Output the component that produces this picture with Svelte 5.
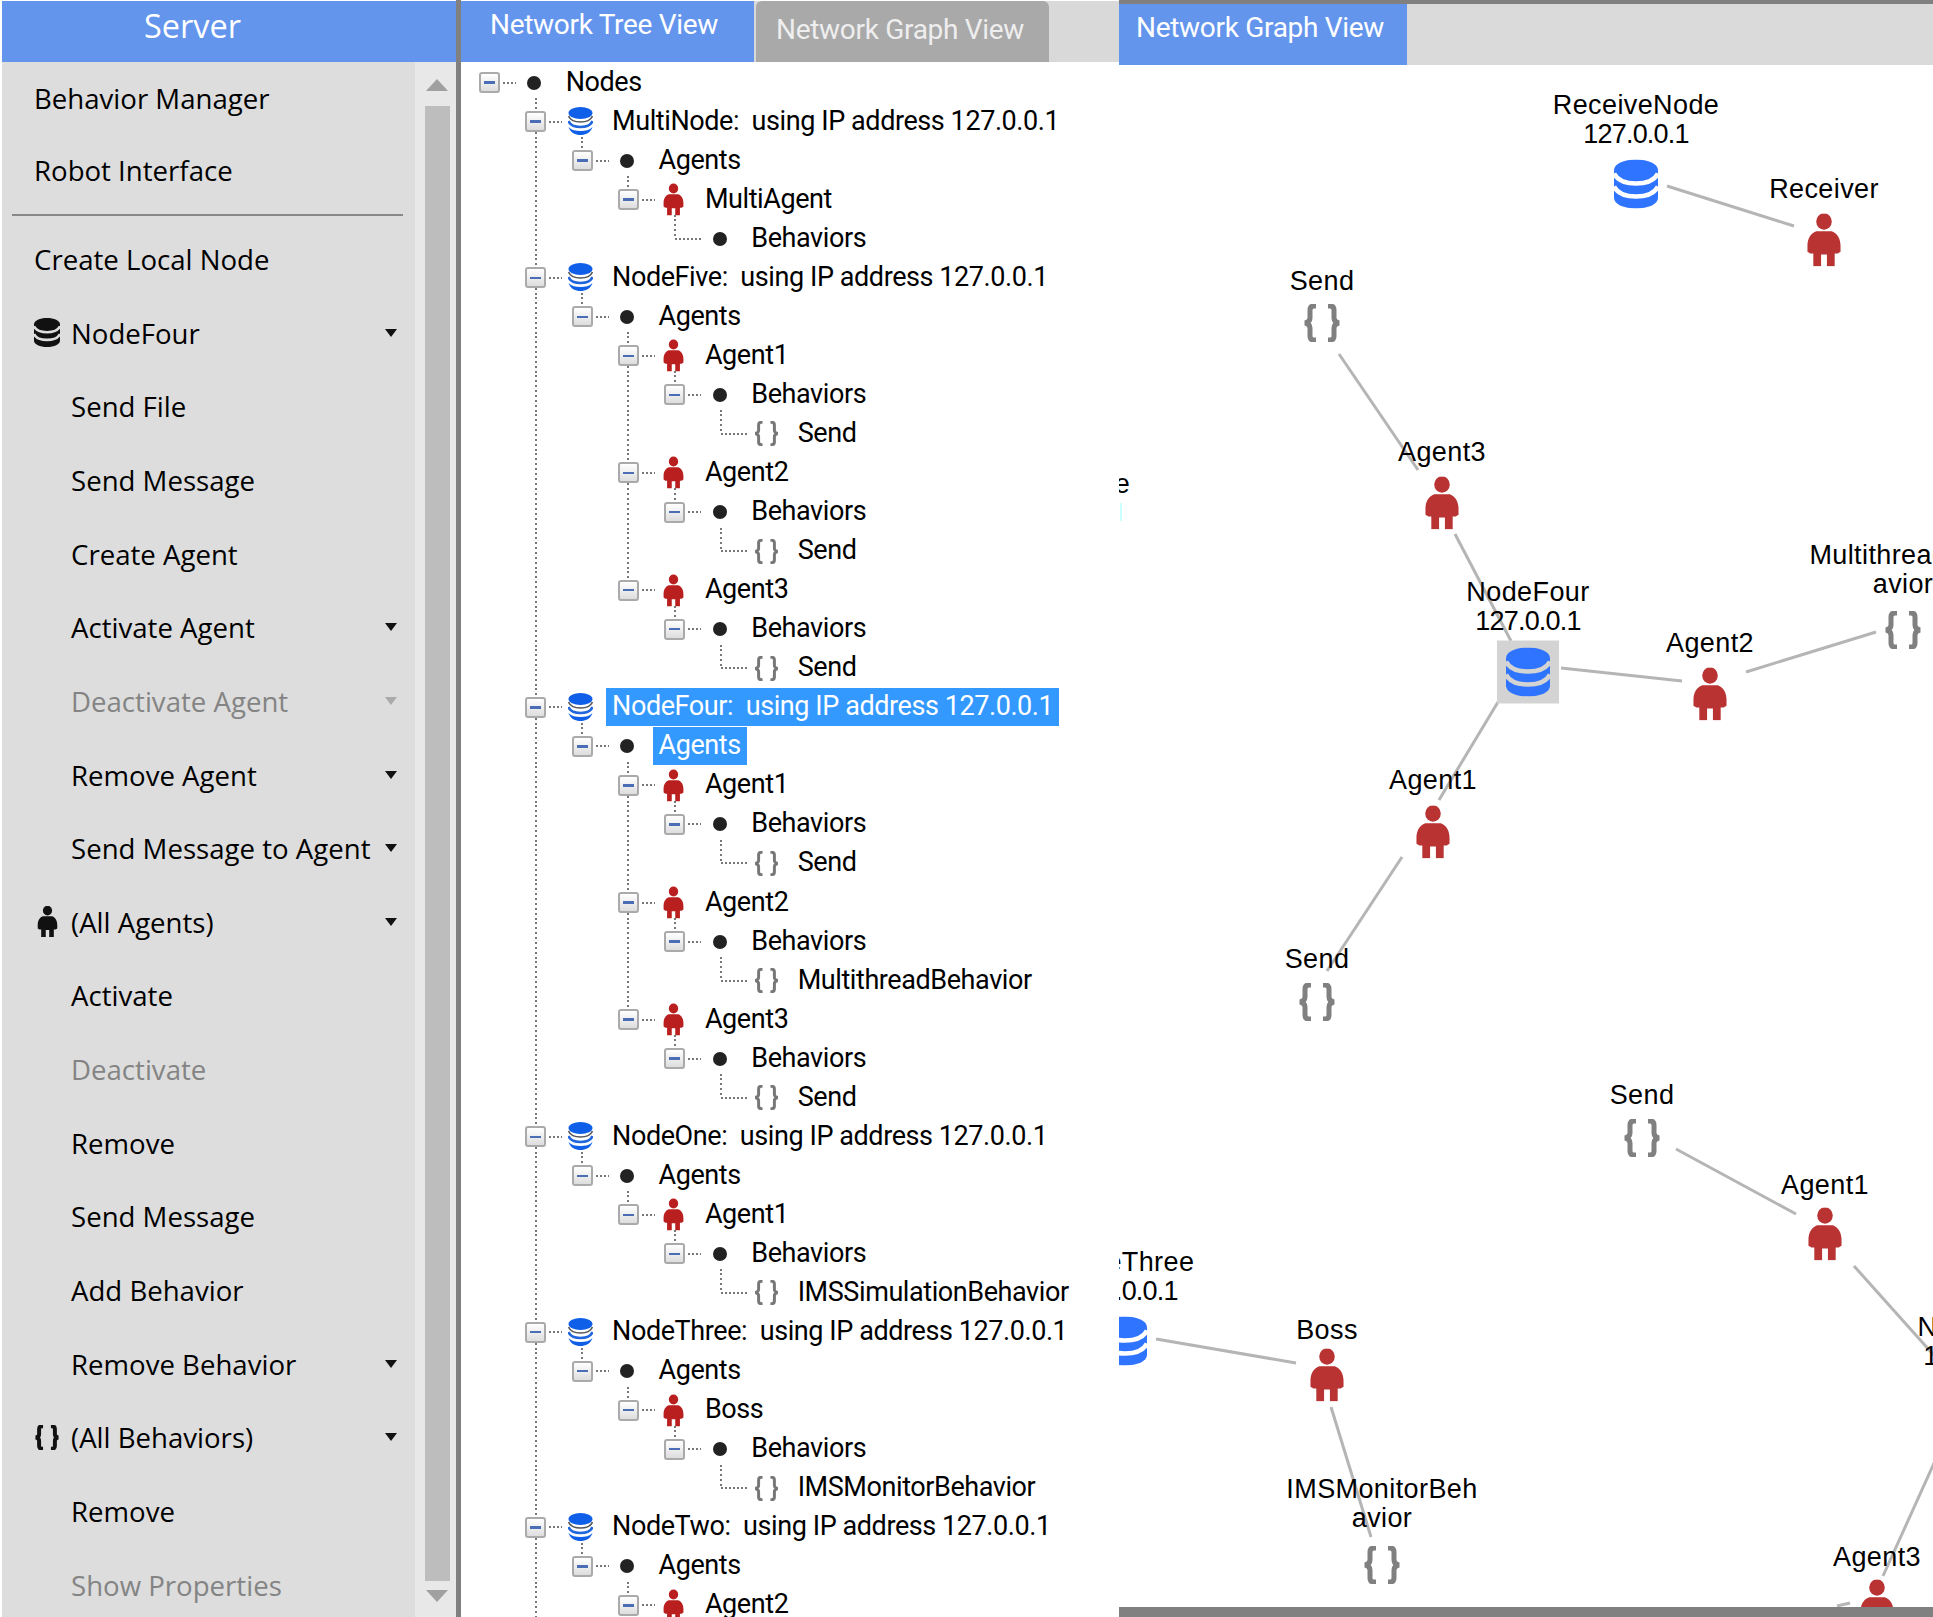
<script>
  const menu = [
    { text: 'Behavior Manager', indent: false },
    { text: 'Robot Interface', indent: false },
    { sep: true },
    { text: 'Create Local Node', indent: false },
    { text: 'NodeFour', icon: 'db', arrow: true },
    { text: 'Send File' },
    { text: 'Send Message' },
    { text: 'Create Agent' },
    { text: 'Activate Agent', arrow: true },
    { text: 'Deactivate Agent', arrow: true, disabled: true },
    { text: 'Remove Agent', arrow: true },
    { text: 'Send Message to Agent', arrow: true },
    { text: '(All Agents)', icon: 'person', arrow: true },
    { text: 'Activate' },
    { text: 'Deactivate', disabled: true },
    { text: 'Remove' },
    { text: 'Send Message' },
    { text: 'Add Behavior' },
    { text: 'Remove Behavior', arrow: true },
    { text: '(All Behaviors)', icon: 'braces', arrow: true },
    { text: 'Remove' },
    { text: 'Show Properties', disabled: true },
  ];

  const ip = ':  using IP address 127.0.0.1';

  // level, icon, label, selected
  const tree = [
    [0, 'dot', 'Nodes'],
    [1, 'db', 'MultiNode' + ip],
    [2, 'dot', 'Agents'],
    [3, 'person', 'MultiAgent'],
    [4, 'dot', 'Behaviors'],
    [1, 'db', 'NodeFive' + ip],
    [2, 'dot', 'Agents'],
    [3, 'person', 'Agent1'],
    [4, 'dot', 'Behaviors'],
    [5, 'braces', 'Send'],
    [3, 'person', 'Agent2'],
    [4, 'dot', 'Behaviors'],
    [5, 'braces', 'Send'],
    [3, 'person', 'Agent3'],
    [4, 'dot', 'Behaviors'],
    [5, 'braces', 'Send'],
    [1, 'db', 'NodeFour' + ip, true],
    [2, 'dot', 'Agents', true],
    [3, 'person', 'Agent1'],
    [4, 'dot', 'Behaviors'],
    [5, 'braces', 'Send'],
    [3, 'person', 'Agent2'],
    [4, 'dot', 'Behaviors'],
    [5, 'braces', 'MultithreadBehavior'],
    [3, 'person', 'Agent3'],
    [4, 'dot', 'Behaviors'],
    [5, 'braces', 'Send'],
    [1, 'db', 'NodeOne' + ip],
    [2, 'dot', 'Agents'],
    [3, 'person', 'Agent1'],
    [4, 'dot', 'Behaviors'],
    [5, 'braces', 'IMSSimulationBehavior'],
    [1, 'db', 'NodeThree' + ip],
    [2, 'dot', 'Agents'],
    [3, 'person', 'Boss'],
    [4, 'dot', 'Behaviors'],
    [5, 'braces', 'IMSMonitorBehavior'],
    [1, 'db', 'NodeTwo' + ip],
    [2, 'dot', 'Agents'],
    [3, 'person', 'Agent2'],
  ];

  const INDENT = 46.4;
  const col = (level) => 28.2 + level * INDENT;

  function hasNext(i, level) {
    for (let j = i + 1; j < tree.length; j++) {
      if (tree[j][0] < level) return false;
      if (tree[j][0] === level) return true;
    }
    return level === 1;
  }

  const rows = tree.map(([level, icon, text, selected], i) => {
    const next = tree[i + 1];
    const parent = i === tree.length - 1 || next[0] > level;
    const guides = [];
    for (let k = 1; k < level; k++) {
      if (hasNext(i, k)) guides.push({ x: col(k), top: 0, h: 39.1 });
    }
    if (level > 0) guides.push({ x: col(level), top: 0, h: hasNext(i, level) ? 39.1 : 20 });
    if (parent && i < tree.length - 1) guides.push({ x: col(level + 1), top: 35, h: 4 });
    return { level, icon, text, selected, parent, guides };
  });

  const OX = 1119;
  const OY = 65;

  const edges = [
    [1667, 186, 1794, 226],
    [1339, 354, 1418, 470],
    [1455, 534, 1511, 641],
    [1561, 668, 1682, 681],
    [1746, 672, 1876, 632],
    [1498, 702, 1439, 800],
    [1402, 857, 1327, 971],
    [1676, 1149, 1796, 1214],
    [1854, 1266, 1940, 1362],
    [1940, 1450, 1883, 1576],
    [1837, 1606, 1850, 1603],
    [1156, 1339, 1296, 1363],
    [1331, 1407, 1371, 1537],
  ];

  const nodes = [
    { type: 'db', x: 1636, y: 184, label: ['ReceiveNode', '127.0.0.1'], ly: 105 },
    { type: 'person', x: 1824, y: 240, label: ['Receiver'], ly: 189 },
    { type: 'braces', x: 1322, y: 323, label: ['Send'], ly: 281 },
    { type: 'person', x: 1442, y: 503, label: ['Agent3'], ly: 452 },
    { type: 'db', x: 1528, y: 672, label: ['NodeFour', '127.0.0.1'], ly: 592, selected: true },
    { type: 'person', x: 1710, y: 694, label: ['Agent2'], ly: 643 },
    { type: 'braces', x: 1903, y: 630, label: ['MultithreadBeh', 'avior'], ly: 555 },
    { type: 'person', x: 1433, y: 832, label: ['Agent1'], ly: 780 },
    { type: 'braces', x: 1317, y: 1002, label: ['Send'], ly: 959 },
    { type: 'braces', x: 1642, y: 1138, label: ['Send'], ly: 1095 },
    { type: 'person', x: 1825, y: 1234, label: ['Agent1'], ly: 1185 },
    { type: 'db', x: 1125, y: 1341, label: ['NodeThree', '127.0.0.1'], ly: 1262 },
    { type: 'person', x: 1327, y: 1375, label: ['Boss'], ly: 1330 },
    { type: 'braces', x: 1382, y: 1565, label: ['IMSMonitorBeh', 'avior'], ly: 1489 },
    { type: 'person', x: 1877, y: 1606, label: ['Agent3'], ly: 1557 },
    { type: 'db', x: 1976, y: 1400, label: ['NodeTwo', '127.0.0.1'], ly: 1327 },
    { type: 'db', x: 1071, y: 560, label: ['NodeOne'], ly: 484 },
  ];
</script>

{#snippet db(w, h, fill, gap)}
  <svg width={w} height={h} viewBox="0 0 44 49">
    <path d="M0 11C0 4 10 0 22 0s22 4 22 11v27c0 7-10 11-22 11S0 45 0 38Z" fill={fill} />
    <path d="M0 14C4 22 14 24 22 24s18-2 22-10M0 27c4 8 14 10 22 10s18-2 22-10" fill="none" stroke={gap} stroke-width="4.5" />
  </svg>
{/snippet}

{#snippet treeDb()}
  <svg width="25" height="29" viewBox="0 0 25 29">
    <ellipse cx="12.5" cy="6" rx="12" ry="6" fill="#0f5fe8" />
    <path d="M.5 9c2 5 7 6 12 6s10-1 12-6" fill="none" stroke="#555" stroke-width="1.6" />
    <path d="M.5 14c2 5 7 6 12 6s10-1 12-6" fill="none" stroke="#2266dd" stroke-width="2.6" />
    <path d="M.5 20c2 6 7 8 12 8s10-2 12-8c-3 3-7 4-12 4s-9-1-12-4Z" fill="#0f5fe8" />
  </svg>
{/snippet}

{#snippet person(w, h, fill)}
  <svg width={w} height={h} viewBox="0 0 36 54">
    <ellipse cx="18" cy="8" rx="8" ry="8.5" fill={fill} />
    <path d="M10 18h16c6 2 9 8 9 15v6l-3 2h-3v13h-8V42h-6v12H7V41H4l-3-2v-6c0-7 3-13 9-15Z" fill={fill} />
  </svg>
{/snippet}

{#snippet braces(w, h, stroke, sw)}
  <svg width={w} height={h} viewBox="0 0 38 38">
    <path d="M13 2h-2Q7 2 7 6v8q0 4-5 5 5 1 5 5v8q0 4 4 4h2M25 2h2q4 0 4 4v8q0 4 5 5-5 1-5 5v8q0 4-4 4h-2" fill="none" stroke={stroke} stroke-width={sw} />
  </svg>
{/snippet}

<div class="app">
  <aside class="side">
    <div class="side-head">Server</div>
    <div class="side-body">
      <nav class="menu">
        {#each menu as item}
          {#if item.sep}
            <div class="sep"></div>
          {:else}
            <div class="item" class:disabled={item.disabled}>
              {#if item.indent !== false}
                <span class="item-icon">
                  {#if item.icon === 'db'}
                    {@render db(26, 29, '#111', '#ddd')}
                  {:else if item.icon === 'person'}
                    <span class="menu-person">{@render person(21, 31, '#111')}</span>
                  {:else if item.icon === 'braces'}
                    {@render braces(26, 25, '#111', 6)}
                  {/if}
                </span>
              {/if}
              <span class="item-text">{item.text}</span>
              {#if item.arrow}<span class="caret"></span>{/if}
            </div>
          {/if}
        {/each}
      </nav>
      <div class="scrollbar">
        <span class="sb-up"></span>
        <div class="sb-thumb"></div>
        <span class="sb-down"></span>
      </div>
    </div>
  </aside>

  <div class="splitter"></div>

  <section class="middle">
    <div class="tabs">
      <div class="tab active">Network Tree View</div>
      <div class="tab inactive">Network Graph View</div>
    </div>
    <div class="tree">
      {#each rows as row}
        <div class="row" style="padding-left: {col(row.level) - 10.5}px">
          {#each row.guides as g}
            <span class="guide" style="left: {g.x - 1}px; top: {g.top}px; height: {g.h}px"></span>
          {/each}
          <span class="lead">
            {#if row.parent}
              <span class="box"><span class="minus"></span></span>
              <span class="dots short"></span>
            {:else}
              <span class="dots long"></span>
            {/if}
          </span>
          <span class="tree-icon">
            {#if row.icon === 'dot'}
              <span class="dot"></span>
            {:else if row.icon === 'db'}
              {@render treeDb()}
            {:else if row.icon === 'person'}
              {@render person(21, 33, '#b91f1f')}
            {:else}
              {@render braces(25, 25, '#777', 4.5)}
            {/if}
          </span>
          <span class="label" class:selected={row.selected}>{row.text}</span>
        </div>
      {/each}
    </div>
  </section>

  <section class="right">
    <div class="right-tabs">
      <div class="tab active right-tab">Network Graph View</div>
    </div>
    <div class="canvas">
      <svg class="edges" width="814" height="1545">
        {#each edges as [x1, y1, x2, y2]}
          <line x1={x1 - OX} y1={y1 - OY} x2={x2 - OX} y2={y2 - OY} />
        {/each}
      </svg>
      {#each nodes as n}
        <div class="glabel" style="left: {n.x - OX}px; top: {n.ly - OY - 14}px">
          {#each n.label as line}
            <div class:ip={line === '127.0.0.1'}>{line}</div>
          {/each}
        </div>
        <div class="gicon" class:selected={n.selected} style="left: {n.x - OX}px; top: {n.y - OY}px">
          {#if n.type === 'db'}
            {@render db(44, 49, '#2f74ff', n.selected ? '#d3d3d3' : '#fff')}
          {:else if n.type === 'person'}
            {@render person(35, 53, '#b93333')}
          {:else}
            {@render braces(38, 38, '#808080', 5)}
          {/if}
        </div>
      {/each}
      <span class="fringe"></span>
    </div>
    <div class="bottom-bar"></div>
  </section>
</div>

<style>
  :global(body) {
    margin: 0;
    background: #fff;
  }

  .app {
    display: flex;
    width: 1933px;
    height: 1617px;
    overflow: hidden;
    font-family: "Open Sans", "Noto Sans", sans-serif;
    color: #000;
  }

  .side {
    width: 454px;
    margin: 1px 0 0 2px;
    display: flex;
    flex-direction: column;
    flex: none;
  }

  .side-head {
    height: 61px;
    flex: none;
    background: #6495ed;
    color: #fff;
    font-size: 32.5px;
    line-height: 50px;
    text-align: center;
    padding-right: 73px;
    box-sizing: border-box;
  }

  .side-body {
    flex: 1;
    display: flex;
    min-height: 0;
  }

  .menu {
    flex: 1;
    background: #ddd;
    overflow: hidden;
  }

  .item {
    height: 73.65px;
    display: flex;
    align-items: center;
    padding: 0 18px 0 32px;
    font-size: 27.6px;
    white-space: nowrap;
  }

  .item:first-child {
    height: 71.6px;
  }

  .item.disabled {
    color: #848484;
  }

  .item-icon {
    width: 37px;
    flex: none;
    display: flex;
    align-items: center;
  }

  .menu-person {
    display: flex;
    margin-left: 3px;
  }

  .item-text {
    flex: 1;
  }

  .caret {
    width: 0;
    height: 0;
    border: 6.5px solid transparent;
    border-top: 8px solid #111;
    border-bottom: 0;
  }

  .disabled .caret {
    border-top-color: #aaa;
  }

  .sep {
    height: 2px;
    background: #888;
    margin: 7px 12px 6px 10px;
  }

  .scrollbar {
    width: 41px;
    flex: none;
    background: #e8e8e8;
    display: flex;
    flex-direction: column;
    align-items: center;
    padding: 17px 0 15px 3px;
    box-sizing: border-box;
  }

  .sb-up,
  .sb-down {
    width: 0;
    height: 0;
    border-left: 11px solid transparent;
    border-right: 11px solid transparent;
  }

  .sb-up {
    border-bottom: 12px solid #a0a0a0;
  }

  .sb-down {
    border-top: 12px solid #a0a0a0;
  }

  .sb-thumb {
    width: 25px;
    flex: 1;
    background: #bdbdbd;
    margin: 15px 0 9px;
  }

  .splitter {
    width: 5px;
    flex: none;
    background: #808080;
  }

  .middle {
    width: 658px;
    flex: none;
    display: flex;
    flex-direction: column;
    margin-top: 1px;
  }

  .tabs {
    height: 61px;
    flex: none;
    display: flex;
    gap: 2px;
    background: #d9d9d9;
  }

  .tab {
    color: #fff;
    font-family: Roboto, sans-serif;
    font-size: 28px;
    letter-spacing: -0.3px;
    white-space: nowrap;
    box-sizing: border-box;
  }

  .tab.active {
    width: 293px;
    background: #6495ed;
    padding-left: 29px;
    line-height: 48px;
  }

  .tab.inactive {
    width: 293px;
    background: #a9a9a9;
    padding-left: 20px;
    line-height: 58px;
    border-radius: 6px 6px 0 0;
    color: #eee;
  }

  .tree {
    flex: 1;
    overflow: hidden;
    background: #fff;
    font-family: Roboto, sans-serif;
    padding-top: 1px;
  }

  .row {
    position: relative;
    height: 39.05px;
    display: flex;
    align-items: center;
    font-size: 27px;
    letter-spacing: -0.42px;
    white-space: pre;
    box-sizing: border-box;
  }

  .guide {
    position: absolute;
    width: 2px;
    background: repeating-linear-gradient(#777 0 2px, transparent 2px 5px);
  }

  .lead {
    width: 43px;
    flex: none;
    display: flex;
    align-items: center;
    position: relative;
  }

  .box {
    width: 21px;
    height: 21px;
    flex: none;
    box-sizing: border-box;
    border: 2px solid #aaa;
    border-radius: 3px;
    background: linear-gradient(#fff, #ddd);
    display: flex;
    align-items: center;
    justify-content: center;
  }

  .minus {
    width: 11px;
    height: 2.5px;
    background: #4a6db5;
  }

  .dots {
    height: 2px;
    background: repeating-linear-gradient(90deg, #777 0 2px, transparent 2px 4px);
  }

  .dots.short {
    width: 13px;
    margin-left: 3px;
  }

  .dots.long {
    width: 27px;
    margin-left: 10.5px;
  }

  .tree-icon {
    width: 25px;
    flex: none;
    margin-right: 13px;
    display: flex;
    align-items: center;
    justify-content: center;
  }

  .dot {
    width: 14px;
    height: 14px;
    border-radius: 50%;
    background: #222;
  }

  .label {
    padding: 0 6px;
    height: 38px;
    line-height: 37px;
  }

  .label.selected {
    background: #3399ff;
    color: #fff;
  }

  .right {
    flex: 1;
    min-width: 0;
    display: flex;
    flex-direction: column;
    border-top: 4px solid #808080;
  }

  .right-tabs {
    height: 61px;
    flex: none;
    background: #dadada;
  }

  .tab.right-tab {
    width: 288px;
    height: 61px;
    padding-left: 17px;
    line-height: 48px;
  }

  .canvas {
    position: relative;
    flex: 1;
    overflow: hidden;
    background: #fff;
    font-family: "Liberation Sans", Arial, sans-serif;
    font-size: 27px;
  }

  .edges {
    position: absolute;
    left: 0;
    top: 0;
  }

  .edges line {
    stroke: #b5b5b5;
    stroke-width: 3;
  }

  .glabel {
    position: absolute;
    transform: translateX(-50%);
    text-align: center;
    white-space: nowrap;
    line-height: 29px;
    letter-spacing: 0.4px;
  }

  .ip {
    letter-spacing: -0.8px;
  }

  .gicon {
    position: absolute;
    transform: translate(-50%, -50%);
    display: flex;
  }

  .gicon.selected {
    background: #d3d3d3;
    padding: 7px 9px;
  }

  .fringe {
    position: absolute;
    left: 1px;
    top: 438px;
    width: 2px;
    height: 18px;
    background: #c8ffff;
  }

  .bottom-bar {
    height: 10px;
    flex: none;
    background: #808080;
  }
</style>
